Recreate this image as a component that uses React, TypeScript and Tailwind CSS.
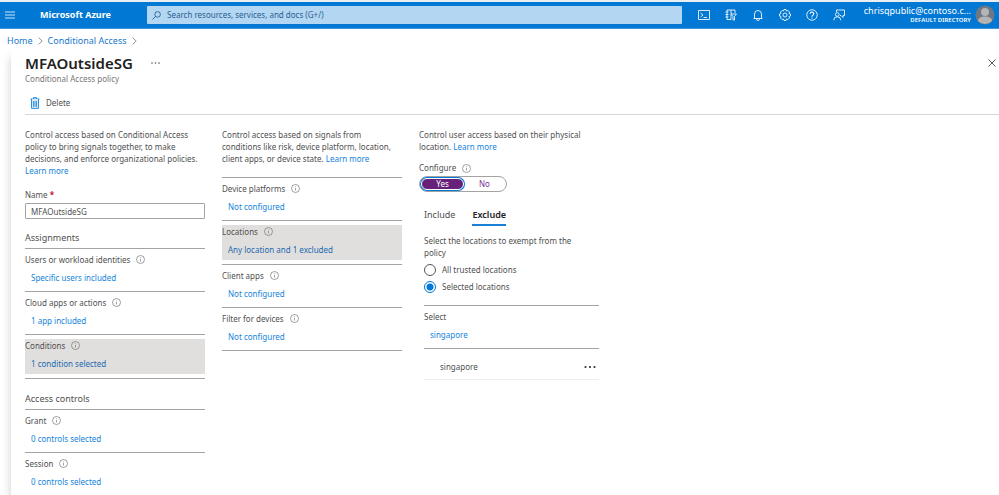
import type { ReactNode } from 'react';

const ASSIGNMENTS = [
    { label: 'Users or workload identities', value: 'Specific users included' },
    { label: 'Cloud apps or actions', value: '1 app included' },
    { label: 'Conditions', value: '1 condition selected', selected: true },
];

const ACCESS_CONTROLS = [
    { label: 'Grant', value: '0 controls selected' },
    { label: 'Session', value: '0 controls selected' },
];

const CONDITIONS = [
    { label: 'Device platforms', value: 'Not configured' },
    { label: 'Locations', value: 'Any location and 1 excluded', selected: true },
    { label: 'Client apps', value: 'Not configured' },
    { label: 'Filter for devices', value: 'Not configured' },
];

type Setting = { label: string; value: string; selected?: boolean };

function InfoIcon() {
    return (
        <svg viewBox="0 0 18 18" className="h-[9px] w-[9px] shrink-0" fill="none" stroke="#777" strokeWidth="1.4" aria-hidden="true">
            <circle cx="9" cy="9" r="8" />
            <path d="M9 8v5M9 4.8v1.6" />
        </svg>
    );
}

function Chevron() {
    return (
        <svg viewBox="0 0 5 8" className="h-2 w-[5px]" fill="none" stroke="#777" strokeWidth="0.8" aria-hidden="true">
            <path d="M.7.7 4.2 4 .7 7.3" />
        </svg>
    );
}

function LearnMore() {
    return <a href="#" className="text-[#1484dc]">Learn more</a>;
}

function HeaderButton({ label, children }: { label: string; children: ReactNode }) {
    return (
        <button type="button" aria-label={label} className="flex h-6 w-6 items-center justify-center">
            <svg viewBox="0 0 24 24" className="h-3 w-3" fill="none" stroke="#fff" strokeWidth="1.7" aria-hidden="true">
                {children}
            </svg>
        </button>
    );
}

function SettingList({ items }: { items: Setting[] }) {
    return (
        <ul className="border-t border-[#a3a3a3]">
            {items.map((item) => (
                <li key={item.label} className="border-b border-[#a3a3a3] py-1">
                    <div className={item.selected ? 'h-[35px] bg-[#e1dfdd]' : 'h-[34px]'}>
                        <div className="flex items-center gap-[6px] leading-[13px]">
                            {item.label}
                            <InfoIcon />
                        </div>
                        <a href="#" className={item.selected ? 'ml-[6px] mt-[6px] block leading-[12px] text-[#1b69b0]' : 'ml-[6px] mt-[6px] block leading-[12px] text-[#1484dc]'}>
                            {item.value}
                        </a>
                    </div>
                </li>
            ))}
        </ul>
    );
}

function Header() {
    return (
        <header className="flex h-[29px] items-center border-b border-t-2 border-b-[#3c97df] border-t-[#e9eef2] bg-[#0078d4] pr-1 text-white">
            <button type="button" aria-label="Show portal menu" className="ml-[5px] mr-[25px]">
                <svg viewBox="0 0 10 8" className="h-2 w-[10px]" stroke="#fff" strokeWidth="0.8" aria-hidden="true">
                    <path d="M0 1h10M0 4h10M0 7h10" />
                </svg>
            </button>
            <span className="w-[107px] text-[9px] font-bold">Microsoft Azure</span>
            <label className="flex h-[18px] flex-1 items-center gap-[6px] rounded-[1px] bg-[#b3d6f2] px-[5px]">
                <svg viewBox="0 0 9 9" className="h-[9px] w-[9px]" fill="none" stroke="#14568f" strokeWidth="0.8" aria-hidden="true">
                    <circle cx="5.6" cy="3.4" r="2.8" />
                    <path d="M3.6 5.4.5 8.5" />
                </svg>
                <input
                    type="search"
                    aria-label="Search"
                    placeholder="Search resources, services, and docs (G+/)"
                    className="min-w-0 flex-1 bg-transparent text-[8px] outline-none placeholder:text-[#2a618f]"
                />
            </label>
            <nav className="ml-[10px] flex gap-[3px]">
                <HeaderButton label="Cloud Shell">
                    <path d="M1 3h22v18H1zM5 8l5 4-5 4M11 17h7" />
                </HeaderButton>
                <HeaderButton label="Directories and subscriptions">
                    <path d="M12 21H4V2h16v6M1 6h6M1 11h6M1 16h6M12 2v19" />
                    <path d="M12 10h11l-4 5v7h-3v-7z" fill="#0078d4" />
                </HeaderButton>
                <HeaderButton label="Notifications">
                    <path d="M3 19h18M5 19v-9a7 7 0 0 1 14 0v9M9 20a3 3 0 0 0 6 0" />
                </HeaderButton>
                <HeaderButton label="Settings">
                    <path d="M10 1h4l1 3 3-1 3 3-1 3 3 1v4l-3 1 1 3-3 3-3-1-1 3h-4l-1-3-3 1-3-3 1-3-3-1v-4l3-1-1-3 3-3 3 1z" />
                    <circle cx="12" cy="12" r="4" />
                </HeaderButton>
                <HeaderButton label="Help">
                    <circle cx="12" cy="12" r="10.5" />
                    <path d="M8.5 9.5a3.5 3.5 0 1 1 5.5 2.8c-1.3.9-2 1.4-2 3M12 17v2.2" strokeWidth="2.2" />
                </HeaderButton>
                <HeaderButton label="Feedback">
                    <path d="M7 6V2h16v11h-3v4l-4-4h-2" />
                    <circle cx="8.5" cy="11" r="3.7" />
                    <path d="M1.5 22.5a7 7 0 0 1 14 0" />
                </HeaderButton>
            </nav>
            <button type="button" aria-label="Account" className="ml-[13px] flex items-center gap-[4px] text-right">
                <span className="flex flex-col items-end">
                    <span className="text-[9px] leading-[10px]">chrisqpublic@contoso.c...</span>
                    <span className="text-[6px] font-semibold leading-[9px]">DEFAULT DIRECTORY</span>
                </span>
                <svg viewBox="0 0 20 20" className="h-5 w-5" aria-hidden="true">
                    <circle cx="10" cy="10" r="9.5" fill="#6f7783" />
                    <circle cx="10" cy="7" r="4" fill="#b4b4b4" />
                    <path d="M3 16c0-3 3-4.5 7-4.5s7 1.5 7 4.5a9.5 9.5 0 0 1-14 0z" fill="#b4b4b4" />
                </svg>
            </button>
        </header>
    );
}

function PolicyColumn() {
    return (
        <section className="w-[180px]">
            <p>
                Control access based on Conditional Access policy to bring signals together, to make decisions, and enforce organizational policies.{' '}
                <LearnMore />
            </p>
            <label htmlFor="policy-name" className="mt-3 block">
                Name <span className="font-bold text-[#b3141d]">*</span>
            </label>
            <input
                id="policy-name"
                defaultValue="MFAOutsideSG"
                className="mt-[2px] block h-4 w-full rounded-[1px] border border-[#a3a3a3] px-[5px] text-[8px]"
            />
            <h2 className="mb-1 mt-[13px] text-[9px]">Assignments</h2>
            <SettingList items={ASSIGNMENTS} />
            <h2 className="mb-1 mt-[14px] text-[9px]">Access controls</h2>
            <SettingList items={ACCESS_CONTROLS} />
        </section>
    );
}

function ConditionsColumn() {
    return (
        <section className="w-[180px]">
            <p className="mb-3 pr-2">
                Control access based on signals from conditions like risk, device platform, location, client apps, or device state.{' '}
                <LearnMore />
            </p>
            <SettingList items={CONDITIONS} />
        </section>
    );
}

function LocationsColumn() {
    const radio = 'h-3 w-3 appearance-none rounded-full border border-[#555] checked:border-[#0078d4] checked:bg-[radial-gradient(circle,#0078d4_3px,#fff_4px)]';

    return (
        <section className="w-[180px]">
            <p>
                Control user access based on their physical location.{' '}
                <LearnMore />
            </p>
            <div className="mt-[9px] flex items-center gap-[6px]">
                Configure
                <InfoIcon />
            </div>
            <div className="mt-[2px] flex h-4 w-[88px] items-center rounded-full border border-[#a3a3a3] px-px">
                <button type="button" className="h-[12px] flex-1 rounded-full border border-white bg-[#68217a] leading-[10px] text-white ring-1 ring-[#0078d4]">
                    Yes
                </button>
                <button type="button" className="flex-1 leading-[12px] text-[#7b2f95]">No</button>
            </div>

            <div className="pl-[5px]">
                <div role="tablist" className="mt-[17px] flex gap-[17px] text-[9px] leading-[12px]">
                    <button type="button" role="tab" aria-selected="false" className="pb-[5px]">Include</button>
                    <button type="button" role="tab" aria-selected="true" className="border-b-2 border-b-[#1a7fd6] pb-[3px] font-semibold text-[#222]">Exclude</button>
                </div>
                <fieldset className="mt-[9px]">
                    <legend className="pr-5">Select the locations to exempt from the policy</legend>
                    <label className="mt-[5px] flex items-center gap-[6px]">
                        <input type="radio" name="locations" className={radio} />
                        All trusted locations
                    </label>
                    <label className="mt-[5px] flex items-center gap-[6px]">
                        <input type="radio" name="locations" defaultChecked className={radio} />
                        Selected locations
                    </label>
                </fieldset>
                <div className="mt-3 border-y border-[#a3a3a3] pb-[7px] pt-[5px]">
                    <div>Select</div>
                    <a href="#" className="ml-[6px] mt-[6px] block text-[#1484dc]">singapore</a>
                </div>
                <div className="flex items-center justify-between border-b border-[#eee] pb-[6px] pl-4 pr-[3px] pt-3">
                    singapore
                    <button type="button" aria-label="More actions for singapore">
                        <svg viewBox="0 0 12 4" className="h-1 w-3" fill="#333" aria-hidden="true">
                            <circle cx="1.5" cy="2" r="1.1" />
                            <circle cx="6" cy="2" r="1.1" />
                            <circle cx="10.5" cy="2" r="1.1" />
                        </svg>
                    </button>
                </div>
            </div>
        </section>
    );
}

export default function App() {
    return (
        <div className="flex min-h-screen flex-col overflow-hidden bg-white font-['Noto_Sans','Open_Sans',sans-serif] text-[8px] leading-[12px] text-[#505050]">
            <Header />
            <nav aria-label="Breadcrumb" className="flex items-center gap-[5px] px-[7px] pt-[6px] text-[9px] leading-[12px] text-[#2079cb]">
                <a href="#">Home</a>
                <Chevron />
                <a href="#">Conditional Access</a>
                <Chevron />
            </nav>
            <main className="ml-[11px] flex-1 pl-[14px] shadow-[0_10px_9px_rgba(0,0,0,0.2)]">
                <div className="flex items-center pr-[3px] pt-[6px]">
                    <h1 className="text-[15px] font-semibold leading-[20px] text-[#222]">MFAOutsideSG</h1>
                    <button type="button" aria-label="More" className="ml-[18px]">
                        <svg viewBox="0 0 9 2" className="h-[2px] w-[9px]" fill="#555" aria-hidden="true">
                            <circle cx="1" cy="1" r="0.8" />
                            <circle cx="4.5" cy="1" r="0.8" />
                            <circle cx="8" cy="1" r="0.8" />
                        </svg>
                    </button>
                    <button type="button" aria-label="Close" className="ml-auto">
                        <svg viewBox="0 0 8 8" className="h-2 w-2" stroke="#333" strokeWidth="0.8" aria-hidden="true">
                            <path d="M.4.4l7.2 7.2M7.6.4L.4 7.6" />
                        </svg>
                    </button>
                </div>
                <p className="text-[#777]">Conditional Access policy</p>
                <div className="border-b border-[#d6d6d6] pb-[5px] pl-[5px] pt-3">
                    <button type="button" className="flex items-center gap-[6px]">
                        <svg viewBox="0 0 10 12" className="h-3 w-[10px]" fill="none" stroke="#1484dc" aria-hidden="true">
                            <path d="M.5 2h9M3.5 2V.6h3V2" strokeWidth="0.9" />
                            <path d="M1.5 2v9.4h7V2" fill="#d5eafa" strokeWidth="0.9" />
                            <path d="M3.5 4v5.8M5 4v5.800M6.500 4v5.800" strokeWidth="0.8" />
                        </svg>
                        Delete
                    </button>
                </div>
                <div className="flex gap-[17px] pt-[14px]">
                    <PolicyColumn />
                    <ConditionsColumn />
                    <LocationsColumn />
                </div>
            </main>
        </div>
    );
}
